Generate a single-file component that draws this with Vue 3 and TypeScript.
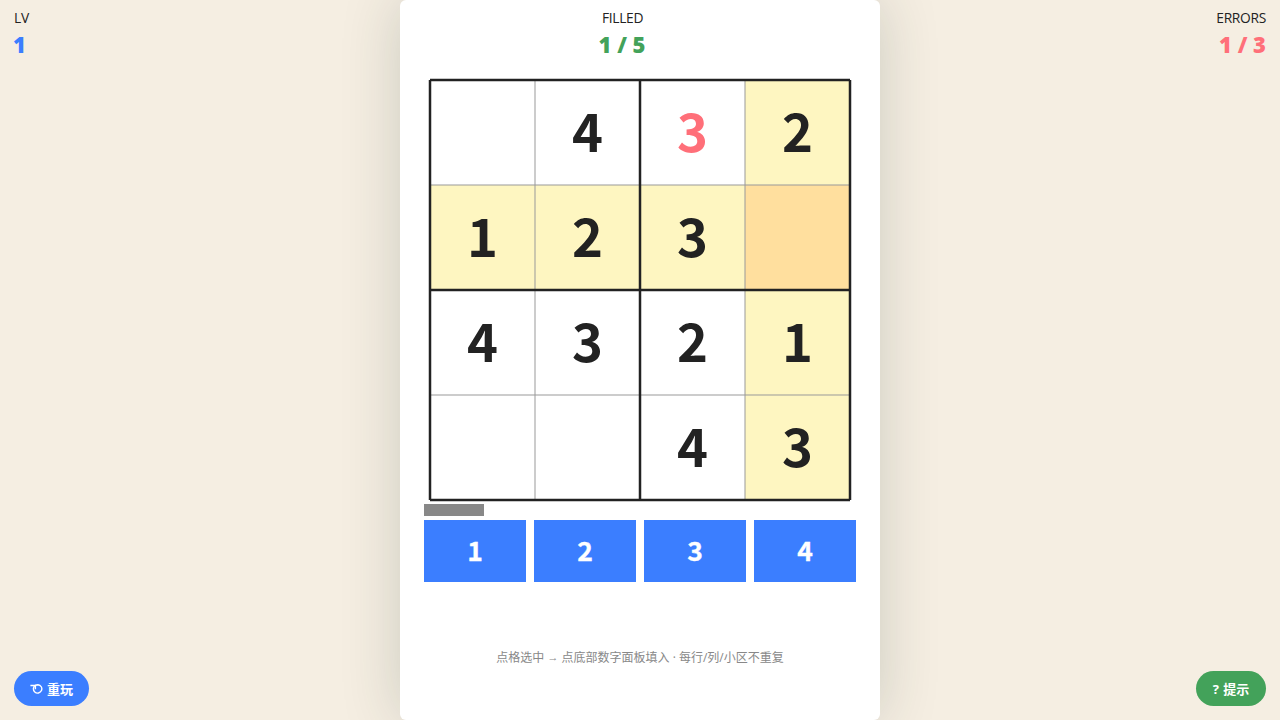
<script setup lang="ts">
import { ref, computed } from 'vue'

const CELL = 105
const ORIGIN = 10

const board: number[][] = [
  [0, 4, 3, 2],
  [1, 2, 3, 0],
  [4, 3, 2, 1],
  [0, 0, 4, 3],
]
const wrong = { row: 0, col: 2 }
const selected = ref({ row: 1, col: 3 })

const cells = computed(() =>
  board.flatMap((line, row) =>
    line.map((value, col) => {
      const s = selected.value
      const active = s.row === row && s.col === col
      return {
        key: row * 4 + col,
        row,
        col,
        value,
        x: ORIGIN + col * CELL,
        y: ORIGIN + row * CELL,
        fill: active ? 'active' : s.row === row || s.col === col ? 'peer' : 'plain',
        error: wrong.row === row && wrong.col === col,
      }
    }),
  ),
)
const thin = [1, 3].map((i) => ORIGIN + i * CELL)
const thick = [0, 2, 4].map((i) => ORIGIN + i * CELL)
const end = ORIGIN + 4 * CELL
</script>

<template>
  <div class="page">
    <main class="stage">
      <svg class="board" width="440" height="430" viewBox="0 0 440 430">
        <g v-for="c in cells" :key="c.key" @click="selected = { row: c.row, col: c.col }">
          <rect :class="c.fill" :x="c.x" :y="c.y" :width="CELL" :height="CELL" />
          <text v-if="c.value" class="digit" :class="{ error: c.error }" :x="c.x + 52.5" :y="c.y + 72">{{ c.value }}</text>
        </g>
        <g class="thin">
          <template v-for="p in thin" :key="p">
            <line :x1="p" :y1="ORIGIN" :x2="p" :y2="end" />
            <line :x1="ORIGIN" :y1="p" :x2="end" :y2="p" />
          </template>
        </g>
        <g class="thick">
          <template v-for="p in thick" :key="p">
            <line :x1="p" :y1="ORIGIN" :x2="p" :y2="end" />
            <line :x1="ORIGIN" :y1="p" :x2="end" :y2="p" />
          </template>
        </g>
      </svg>
      <div class="progress"></div>
      <div class="pad">
        <button v-for="n in 4" :key="n" class="key">{{ n }}</button>
      </div>
      <p class="tip">点格选中 <span class="arrow">→</span> 点底部数字面板填入 · 每行/列/小区不重复</p>
    </main>
    <header class="hud">
      <div class="stat">LV<b class="blue">1</b></div>
      <div class="stat center">FILLED<b class="green">1 / 5</b></div>
      <div class="stat right">ERRORS<b class="red">1 / 3</b></div>
    </header>
    <footer class="actions">
      <button class="pill restart">
        <svg class="icon" width="13" height="12" viewBox="0 0 13 12">
          <path d="M5.6 2.2A4.2 4.2 0 1 0 8 1.7Q6.4 1.7 5.2 2.6" />
          <path d="M0.4 2.5H5.4V6.2" />
        </svg>
        <span>重玩</span>
      </button>
      <button class="pill hint">? 提示</button>
    </footer>
  </div>
</template>

<style>
html,
body {
  margin: 0;
  background: #f5eee2;
}
</style>

<style scoped>
.page {
  position: relative;
  height: 720px;
  overflow: hidden;
  display: flex;
  justify-content: center;
  background: #f5eee2;
  color: #222;
  font-family: 'Open Sans', 'Noto Sans CJK SC', sans-serif;
}
.stage {
  width: 480px;
  height: 720px;
  box-sizing: border-box;
  padding: 70px 20px 0;
  background: #fff;
  border-radius: 6px;
  box-shadow: 0 0 60px rgba(30, 55, 45, 0.19);
}
.board {
  display: block;
  overflow: visible;
}
.plain {
  fill: #fff;
}
.peer {
  fill: #fef6c1;
}
.active {
  fill: #ffdf9e;
}
.digit {
  font: bold 52.5px 'Noto Sans CJK SC', sans-serif;
  text-anchor: middle;
  fill: #222;
}
.digit.error {
  fill: #ff6f79;
}
.thin {
  stroke: #999;
  stroke-width: 1;
}
.thick {
  stroke: #222;
  stroke-width: 2.5;
}
.progress {
  width: 60px;
  height: 12px;
  margin: 4px 0 4px 4px;
  background: #888;
}
.pad {
  display: grid;
  grid-template-columns: repeat(4, 102px);
  gap: 8px;
  margin-left: 4px;
}
.key {
  height: 62px;
  padding: 0 0 3px;
  border: 0;
  background: #3b7eff;
  color: #fff;
  font: bold 26.5px 'Noto Sans CJK SC', sans-serif;
  -webkit-text-stroke: 0.3px #fff;
}
.tip {
  margin: 67px 0 0;
  text-align: center;
  font-size: 12px;
  line-height: 18px;
  color: #888;
}
.arrow {
  display: inline-block;
  line-height: 12px;
  font-family: 'Liberation Sans', sans-serif;
  font-size: 11px;
  transform: translateY(-1px);
}
.hud {
  position: absolute;
  inset: 0 0 auto;
  display: flex;
  justify-content: space-between;
  padding: 9px 14px;
}
.stat {
  font-size: 13.8px;
  line-height: 18px;
  letter-spacing: -0.3px;
}
.stat b {
  display: block;
  margin-top: 2px;
  margin-left: -1px;
  font-size: 22px;
  line-height: 30px;
  font-weight: 900;
  letter-spacing: 0;
}
.center {
  text-align: center;
}
.right {
  text-align: right;
}
.blue {
  color: #3b7eff;
}
.green {
  color: #43a25a;
}
.red {
  color: #ff6f79;
}
.actions {
  position: absolute;
  inset: auto 14px 14px;
  display: flex;
  justify-content: space-between;
}
.pill {
  display: flex;
  align-items: center;
  justify-content: center;
  height: 35px;
  padding: 0;
  border: 0;
  border-radius: 18px;
  color: #fff;
  font: bold 13px 'Open Sans', 'Noto Sans CJK SC', sans-serif;
}
.restart {
  width: 75px;
  gap: 4px;
  background: #3b7eff;
}
.hint {
  width: 70px;
  background: #43a25a;
  word-spacing: 1px;
}
.icon {
  fill: none;
  stroke: #fff;
  stroke-width: 1.4;
}
</style>
